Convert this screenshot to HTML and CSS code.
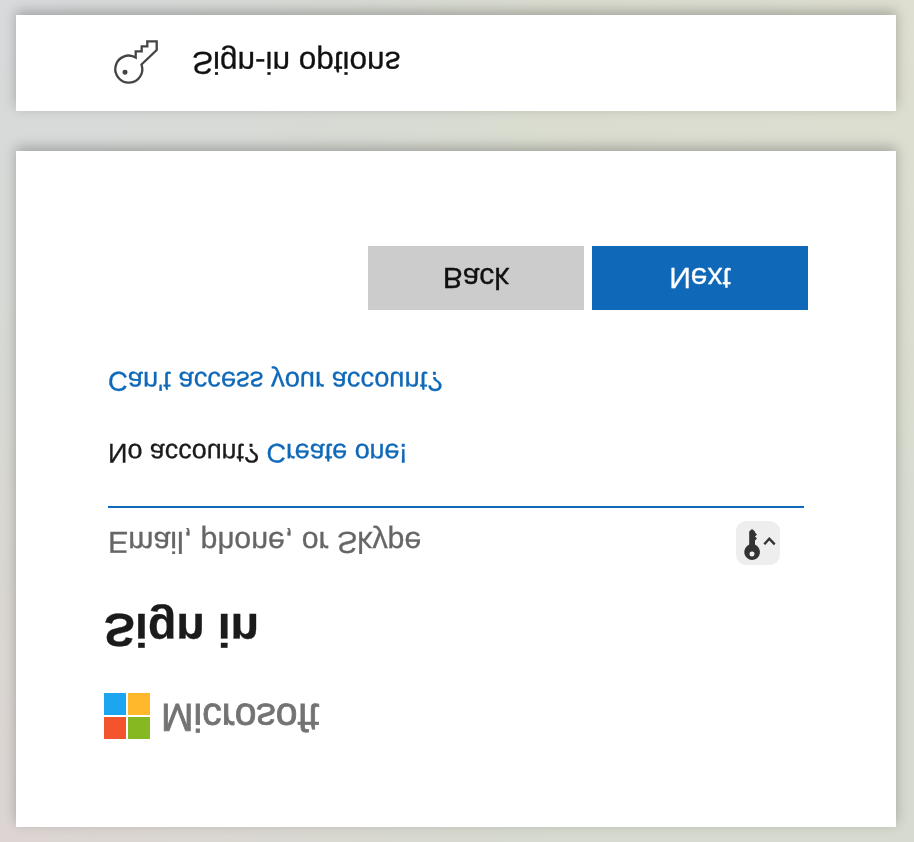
FILE: index.html
```html
<!DOCTYPE html>
<html lang="en">
<head>
<meta charset="utf-8">
<title>Sign in</title>
<link rel="stylesheet" href="styles.css">
</head>
<body>
<main class="page">
  <section class="card card-main">
    <div class="brand">
      <svg class="ms-logo" viewBox="0 0 46 46" aria-hidden="true">
        <rect x="0" y="0" width="22" height="22" fill="#f3532d"/>
        <rect x="24" y="0" width="22" height="22" fill="#85b821"/>
        <rect x="0" y="24" width="22" height="22" fill="#1ba6ef"/>
        <rect x="24" y="24" width="22" height="22" fill="#ffb82c"/>
      </svg>
      <span class="brand-name">Microsoft</span>
    </div>
    <h1 class="title">Sign in</h1>
    <form class="form">
      <div class="field">
        <span class="field-label">Email, phone, or Skype</span>
        <span class="key-badge">
          <svg viewBox="0 0 44 44" width="44" height="44" aria-hidden="true">
            <path fill="#333" fill-rule="evenodd" d="M16 5a8 8 0 0 1 3 15.400V24.500L21 26.500 19 28.500 21 30.500 19 32.500V33.500L16 36 13.200 33.500V20.400A8 8 0 0 1 16 5ZM16 8.500a2.500 2.500 0 1 0 0 5 2.500 2.500 0 0 0 0-5Z"/>
            <path fill="none" stroke="#333" stroke-width="2.400" d="M28.300 20.700l5 5.600 5.400-5.600"/>
          </svg>
        </span>
      </div>
      <p class="line line-account">No account? <a href="#">Create one!</a></p>
      <p class="line line-access"><a href="#">Can't access your account?</a></p>
      <div class="actions">
        <button type="button" class="btn btn-back">Back</button>
        <button type="button" class="btn btn-next">Next</button>
      </div>
    </form>
  </section>
  <section class="card card-options">
    <svg class="options-key" viewBox="0 0 48 48" width="48" height="48" aria-hidden="true">
      <path fill="none" stroke="#444" stroke-width="2.300" d="M23.700 29.500V35.700H29.700V40.700H35.300V45.700H44.700V37L29.500 22.500A13.500 13.500 0 1 0 23.700 29.500Z"/>
      <circle cx="13" cy="14.700" r="2.500" fill="#444"/>
    </svg>
    <span class="options-text">Sign-in options</span>
  </section>
</main>
</body>
</html>
```

FILE: styles.css
```css
* {
  box-sizing: border-box;
}

html,
body {
  margin: 0;
  padding: 0;
  height: 842px;
  overflow: hidden;
}

.page {
  height: 842px;
  padding: 15px 18px 0 16px;
  display: flex;
  flex-direction: column;
  gap: 40px;
  transform: scaleY(-1);
  font-family: "Liberation Sans", Arial, sans-serif;
  color: #1b1b1b;
  text-rendering: geometricPrecision;
  -webkit-text-stroke: 0.3px;
  background:
    radial-gradient(circle at 0% 100%, #d8dadc 0, rgba(216, 218, 220, 0) 45%),
    radial-gradient(circle at 100% 100%, #dedfd1 0, rgba(222, 223, 209, 0) 55%),
    radial-gradient(circle at 0% 0%, #ddd5d3 0, rgba(221, 213, 211, 0) 45%),
    #d6dacf;
}

.card {
  background: #fff;
  box-shadow: 0 4px 12px rgba(0, 0, 0, 0.25);
}

.card-main {
  height: 676px;
  padding: 88px 88px 0;
}

.brand {
  display: flex;
  align-items: center;
  gap: 11px;
  height: 46px;
}

.ms-logo {
  width: 46px;
  height: 46px;
  display: block;
}

.brand-name {
  font-size: 39px;
  line-height: 46px;
  color: #737373;
  -webkit-text-stroke: 0.8px #737373;
}

.title {
  margin: 35px 0 0;
  font-size: 46.500px;
  line-height: 56px;
  font-weight: 700;
  color: #1b1b1b;
}

.form {
  margin-top: 24px;
  padding: 0 4px;
}

.field {
  height: 72px;
  display: flex;
  align-items: center;
  justify-content: space-between;
  padding-right: 24px;
  border-bottom: 2px solid #0f69b8;
}

.field-label {
  margin-top: 4px;
  font-size: 30.300px;
  line-height: 36px;
  color: #666;
}

.key-badge {
  width: 44px;
  height: 44px;
  border-radius: 10px;
  background: #eee;
  display: block;
}

.key-badge svg {
  display: block;
}

.line {
  margin: 0;
  font-size: 27.300px;
  line-height: 32px;
}

.line a {
  color: #0f69b8;
  text-decoration: none;
}

.line-account {
  margin-top: 37px;
  font-size: 26.900px;
}

.line-access {
  margin-top: 40px;
}

.actions {
  display: flex;
  justify-content: flex-end;
  gap: 8px;
  margin: 55px -4px 0 0;
}

.btn {
  width: 216px;
  height: 64px;
  border: 0;
  padding: 0;
  font-family: inherit;
  font-size: 30px;
}

.btn-back {
  background: #ccc;
  color: #111;
}

.btn-next {
  background: #0f69b8;
  color: #fff;
}

.card-options {
  height: 96px;
  display: flex;
  align-items: center;
  gap: 32px;
  padding-left: 96px;
}

.options-key {
  display: block;
}

.options-text {
  font-size: 31.500px;
  line-height: 40px;
  color: #111;
}
```
